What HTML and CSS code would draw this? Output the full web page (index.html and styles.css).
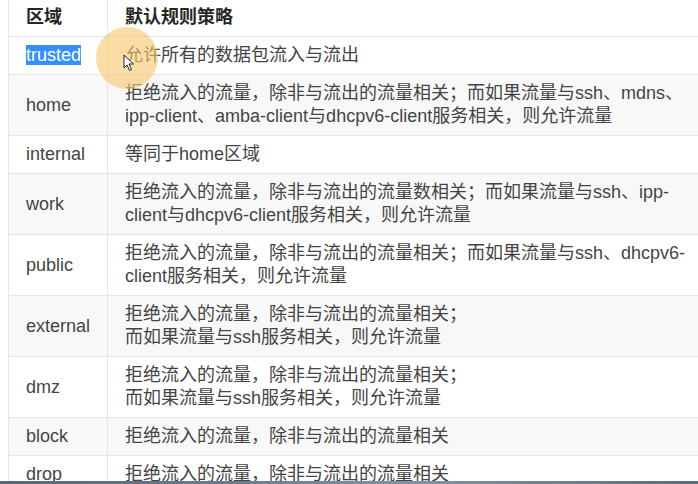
FILE: index.html
```html
<!DOCTYPE html>
<html lang="zh-CN">
<head>
    <meta charset="UTF-8">
    <title>firewalld 区域</title>
    <link rel="stylesheet" href="styles.css">
</head>
<body>
    <div class="page">
        <table class="zones">
            <thead>
                <tr>
                    <th class="name">区域</th>
                    <th>默认规则策略</th>
                </tr>
            </thead>
            <tbody>
                <tr>
                    <td class="name"><span class="selected">trusted</span></td>
                    <td>允许所有的数据包流入与流出</td>
                </tr>
                <tr>
                    <td class="name">home</td>
                    <td>拒绝流入的流量，除非与流出的流量相关；而如果流量与ssh、mdns、<br>ipp-client、amba-client与dhcpv6-client服务相关，则允许流量</td>
                </tr>
                <tr>
                    <td class="name">internal</td>
                    <td>等同于home区域</td>
                </tr>
                <tr>
                    <td class="name">work</td>
                    <td>拒绝流入的流量，除非与流出的流量数相关；而如果流量与ssh、ipp-<br>client与dhcpv6-client服务相关，则允许流量</td>
                </tr>
                <tr>
                    <td class="name">public</td>
                    <td>拒绝流入的流量，除非与流出的流量相关；而如果流量与ssh、dhcpv6-<br>client服务相关，则允许流量</td>
                </tr>
                <tr>
                    <td class="name">external</td>
                    <td>拒绝流入的流量，除非与流出的流量相关；<br>而如果流量与ssh服务相关，则允许流量</td>
                </tr>
                <tr>
                    <td class="name">dmz</td>
                    <td>拒绝流入的流量，除非与流出的流量相关；<br>而如果流量与ssh服务相关，则允许流量</td>
                </tr>
                <tr>
                    <td class="name">block</td>
                    <td>拒绝流入的流量，除非与流出的流量相关</td>
                </tr>
                <tr>
                    <td class="name">drop</td>
                    <td>拒绝流入的流量，除非与流出的流量相关</td>
                </tr>
            </tbody>
        </table>
    </div>

    <!-- 鼠标高亮圈和指针 -->
    <div class="click-ring"></div>
    <svg class="pointer" width="12" height="18" viewBox="0 0 12 18">
        <path d="M1 1 L1 14 L4 11 L6.5 16.5 L8.5 15.5 L6 10 L10.5 10 Z" fill="#fff" stroke="#222" stroke-width="1"/>
    </svg>

    <div class="taskbar"></div>
</body>
</html>
```

FILE: styles.css
```css
* {
    margin: 0;
    padding: 0;
}

html,
body {
    overflow: hidden;
    background: #ffffff;
}

body {
    font-family: "Liberation Sans", Arial, "Noto Sans CJK SC", sans-serif;
    font-size: 18px;
    color: #444444;
}

.page {
    padding-left: 8px;
    margin-top: -2px;
}

.zones {
    width: 720px;
    border-collapse: collapse;
}

.zones th,
.zones td {
    border: 1px solid #e6e6e6;
    padding: 7px 17px;
    line-height: 23px;
    text-align: left;
    vertical-align: middle;
}

.zones th {
    font-weight: bold;
    color: #262626;
}

.zones .name {
    width: 63px;
    padding-left: 17px;
}

.zones tbody tr:nth-child(even) {
    background-color: #f9f8f9;
}

.selected {
    background-color: #3391ff;
    color: #ffffff;
}

.click-ring {
    position: fixed;
    left: 96px;
    top: 27px;
    width: 62px;
    height: 62px;
    border-radius: 50%;
    background-color: rgba(245, 200, 110, 0.62);
}

.pointer {
    position: fixed;
    left: 123px;
    top: 54px;
}

.taskbar {
    position: fixed;
    left: 0;
    right: 0;
    bottom: 0;
    height: 3px;
    background: linear-gradient(to right, #5a6675 0%, #6c7888 30%, #8592a2 60%, #5e6a7a 100%);
}
```
